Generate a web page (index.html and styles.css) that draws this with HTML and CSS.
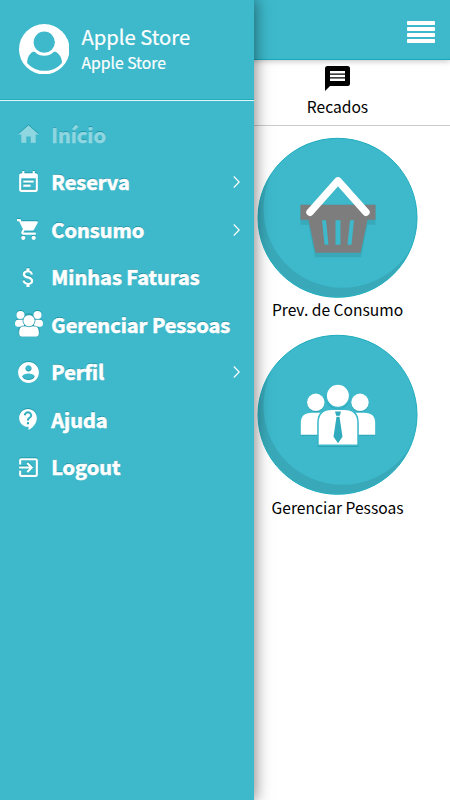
FILE: index.html
```html
<!DOCTYPE html>
<html lang="pt-BR">
<head>
<meta charset="utf-8">
<title>Início</title>
<link rel="stylesheet" href="styles.css">
</head>
<body>
<div class="page">
  <header class="topbar">
    <svg class="burger" viewBox="0 0 28 22"><rect width="28" height="4" rx=".8"/><rect y="6" width="28" height="4" rx=".8"/><rect y="12" width="28" height="4" rx=".8"/><rect y="18" width="28" height="4" rx=".8"/></svg>
  </header>
  <section class="tabs">
    <a class="tab">
      <svg class="message" viewBox="0 0 25 25"><path d="M2.500 0h20A2.500 2.500 0 0 1 25 2.500v15a2.500 2.500 0 0 1-2.500 2.500H5L0 25V2.500A2.500 2.500 0 0 1 2.500 0zM5 5v2.500h15V5zm0 3.700v2.500h15V8.700zm0 3.800V15h15v-2.500z"/></svg>
      <span>Recados</span>
    </a>
  </section>
  <main class="tiles">
    <a class="tile">
      <span class="disc">
        <svg class="art" viewBox="0 0 160 160">
          <path class="shade" d="M43 67h75v20h-8l-6.500 32.500h-46L51 87h-8z"/>
          <path class="basket" d="M43 67h75v15h-8l-7 33H58l-7-33h-8z"/>
          <path class="slots" d="M64.500 82.500h4l2.500 24.500h-4zM78 82.500h5V107h-5zM92.500 82.500h4L94 107h-4z"/>
          <path class="handle" d="M52.500 74.500L80.500 43l28 31.500"/>
        </svg>
      </span>
      <span class="caption">Prev. de Consumo</span>
    </a>
    <a class="tile">
      <span class="disc">
        <svg class="art people" viewBox="0 0 160 160">
          <g><circle cx="58.300" cy="67.500" r="8.700"/><circle cx="102.500" cy="67.500" r="8.700"/><path d="M43.300 100V88q0-10 11-10h9q-3 4-3 10v12zM117.700 100V88q0-10-11-10h-9q3 4 3 10v12z"/></g>
          <circle class="front" cx="80.400" cy="61" r="11.700"/>
          <path class="front" d="M60.500 110.500V88q0-13.500 14-13.500h12q14 0 14 13.500v22.500z"/>
          <path class="tie" d="M77.500 76.700h6l-1.500 5.300 3 20-4.500 6.500L76 102l3-20z"/><path class="knot" d="M78 81.500h5"/>
        </svg>
      </span>
      <span class="caption">Gerenciar Pessoas</span>
    </a>
  </main>
</div>

<aside class="drawer">
  <div class="profile">
    <svg class="avatar" viewBox="0 0 50 50"><circle class="plate" cx="25" cy="25" r="25"/><path class="cut" d="M13.700 27.500C9.500 30 8.300 34 8 38.500 17 49 34 49 42.500 38.500 42.500 34 40.500 30 36.300 27.500z"/><circle class="plate" cx="25" cy="18.500" r="13"/><circle class="cut" cx="25" cy="18" r="10.500"/></svg>
    <div class="who"><strong>Apple Store</strong><span>Apple Store</span></div>
  </div>
  <nav class="menu">
    <a class="item current"><svg class="icon" viewBox="0 0 24 24"><path d="M10 20v-6h4v6h5v-8h3L12 3 2 12h3v8z"/></svg><span>Início</span></a>
    <a class="item"><svg class="icon" viewBox="0 0 24 24"><path d="M17 10H7v2h10v-2zm2-7h-1V1h-2v2H8V1H6v2H5c-1.110 0-1.990.9-1.990 2L3 19c0 1.100.89 2 2 2h14c1.100 0 2-.9 2-2V5c0-1.100-.9-2-2-2zm0 16H5V8h14v11zm-5-5H7v2h7v-2z"/></svg><span>Reserva</span><svg class="chevron" viewBox="0 0 6 11"><path d="M.5.5l5 5-5 5"/></svg></a>
    <a class="item"><svg class="icon" viewBox="0 0 24 24"><path d="M7 18c-1.100 0-1.990.9-1.990 2S5.900 22 7 22s2-.9 2-2-.9-2-2-2zM1 2v2h2l3.600 7.590-1.350 2.450c-.16.28-.25.61-.25.960 0 1.100.9 2 2 2h12v-2H7.420c-.14 0-.25-.11-.25-.25l.03-.12.9-1.630h7.450c.75 0 1.410-.41 1.750-1.030l3.580-6.490A1 1 0 0 0 20 4H5.210l-.94-2H1zm16 16c-1.100 0-1.990.9-1.990 2s.89 2 1.990 2 2-.9 2-2-.9-2-2-2z"/></svg><span>Consumo</span><svg class="chevron" viewBox="0 0 6 11"><path d="M.5.5l5 5-5 5"/></svg></a>
    <a class="item"><svg class="icon" viewBox="0 0 24 24"><path d="M11.800 10.900c-2.270-.59-3-1.200-3-2.150 0-1.090 1.010-1.850 2.700-1.850 1.780 0 2.440.85 2.500 2.100h2.210c-.07-1.720-1.120-3.300-3.210-3.810V3h-3v2.160c-1.940.42-3.500 1.680-3.500 3.610 0 2.310 1.910 3.460 4.700 4.130 2.500.6 3 1.480 3 2.410 0 .69-.49 1.790-2.700 1.790-2.060 0-2.870-.92-2.980-2.100h-2.200c.12 2.190 1.760 3.420 3.680 3.830V21h3v-2.150c1.950-.37 3.500-1.500 3.500-3.550 0-2.840-2.430-3.810-4.700-4.400z"/></svg><span>Minhas Faturas</span></a>
    <a class="item"><svg class="icon group" viewBox="0 0 28 26"><circle cx="5.500" cy="4" r="4"/><circle cx="22.500" cy="4" r="4"/><path d="M0 13c0-3 1-4.300 3-4.300h6v7H2.500Q0 15.500 0 13zM28 13c0-3-1-4.300-3-4.300h-6v7h6.500q2.500-.2 2.500-2.700z"/><path class="rim" d="M3.700 22.500c0-4.500 1-7.500 5.500-7.500h9.600c4.500 0 5.500 3 5.500 7.500q0 3.500-3 3.500H6.700q-3 0-3-3.500z"/><circle class="rim" cx="14" cy="9.700" r="6"/></svg><span>Gerenciar Pessoas</span></a>
    <a class="item"><svg class="icon" viewBox="0 0 24 24"><path d="M12 2C6.480 2 2 6.480 2 12s4.480 10 10 10 10-4.480 10-10S17.520 2 12 2zm0 3c1.660 0 3 1.340 3 3s-1.340 3-3 3-3-1.340-3-3 1.340-3 3-3zm0 14.200c-2.500 0-4.710-1.280-6-3.220.03-1.990 4-3.080 6-3.080 1.990 0 5.970 1.090 6 3.080-1.290 1.940-3.500 3.220-6 3.220z"/></svg><span>Perfil</span><svg class="chevron" viewBox="0 0 6 11"><path d="M.5.5l5 5-5 5"/></svg></a>
    <a class="item"><svg class="icon" viewBox="0 0 24 24"><path d="M11.500 2C6.810 2 3 5.810 3 10.500S6.810 19 11.500 19h.5v3c4.860-2.340 8-7 8-11.500C20 5.810 16.190 2 11.500 2zm1 14.500h-2v-2h2v2zm0-3.500h-2c0-3.250 3-3 3-5 0-1.100-.9-2-2-2s-2 .9-2 2h-2c0-2.210 1.790-4 4-4s4 1.790 4 4c0 2.500-3 2.750-3 5z"/></svg><span>Ajuda</span></a>
    <a class="item"><svg class="icon" viewBox="0 0 24 24"><path d="M10.090 15.590L11.500 17l5-5-5-5-1.410 1.410L12.670 11H3v2h9.670l-2.580 2.590zM19 3H5c-1.110 0-2 .9-2 2v4h2V5h14v14H5v-4H3v4c0 1.100.89 2 2 2h14c1.100 0 2-.9 2-2V5c0-1.100-.9-2-2-2z"/></svg><span>Logout</span></a>
  </nav>
</aside>
</body>
</html>
```
FILE: styles.css
```css
* { box-sizing: border-box; }

body {
  margin: 0;
  height: 800px;
  overflow: hidden;
  position: relative;
  background: #fff;
  color: #000;
  font-family: "Noto Sans CJK SC", "Noto Sans", sans-serif;
}

svg { display: block; }

.topbar {
  height: 60px;
  padding: 5px 15px 0 0;
  display: flex;
  align-items: center;
  justify-content: flex-end;
  background: #3db9cb;
  border-bottom: 1px solid #16a9bb;
  box-shadow: 0 1px 6px rgba(0, 0, 0, .25);
}

.burger { width: 28px; height: 22px; fill: #fff; }

.tabs {
  display: grid;
  grid-template-columns: 1fr 1fr;
  height: 66px;
  padding-top: 6px;
  border-bottom: 1px solid #ccc;
}

.tab {
  grid-column: 2;
  display: flex;
  flex-direction: column;
  align-items: center;
  font-size: 15.600px;
  line-height: 24px;
}

.message { width: 25px; height: 25px; margin-bottom: 3px; }

.tiles {
  display: grid;
  grid-template-columns: 1fr 1fr;
  padding-top: 11.500px;
}

.tile {
  grid-column: 2;
  height: 197.500px;
  display: flex;
  flex-direction: column;
  align-items: center;
}

.disc {
  width: 160px;
  height: 160px;
  flex: none;
  border-radius: 50%;
  background: #3db9cb;
  border: 1px solid #1eacbd;
  box-shadow: inset 5px -9px 0 #39a9b9;
  transform: translate(-.5px, -.2px);
}

.art { width: 160px; height: 160px; margin: -1px; }
.shade { fill: #39a9b9; }
.basket { fill: #7d7d7d; }
.slots { fill: #3db9cb; }
.handle { fill: none; stroke: #fff; stroke-width: 7.400; stroke-linecap: round; stroke-linejoin: round; }
.people { fill: #fff; filter: drop-shadow(0 1px 0 #2aa3b4); }
.front { stroke: #3db9cb; stroke-width: 1.500; }
.tie { fill: #2fabbd; }
.knot { fill: none; stroke: #fff; stroke-width: 1; }

.caption { margin-top: -.5px; font-size: 15.600px; line-height: 24px; white-space: nowrap; }

.drawer {
  position: absolute;
  left: 0;
  top: 0;
  width: 254px;
  height: 800px;
  background: #3db9cb;
  color: #fff;
  box-shadow: 0 0 15px 1px rgba(0, 0, 0, .5);
}

.profile {
  height: 101px;
  padding: 0 0 2px 18.500px;
  display: flex;
  align-items: center;
  gap: 12.500px;
  border-bottom: 1px solid #e2f5f7;
  box-shadow: inset 0 -1px 0 #20adbe;
}

.avatar { width: 50.500px; height: 50.500px; }
.plate { fill: #fff; }
.cut { fill: #3db9cb; }
.who { display: flex; flex-direction: column; white-space: nowrap; -webkit-text-stroke: .2px #fff; }
.who strong { font-size: 20.200px; font-weight: 400; line-height: 26px; }
.who span { font-size: 15.700px; line-height: 25px; }

.menu { padding-top: 10px; }

.item {
  height: 47.500px;
  padding: 0 14.500px 0 16px;
  display: flex;
  align-items: center;
  font-size: 20px;
  font-weight: 700;
  white-space: nowrap;
  text-shadow: 0 -1px 0 #168c9c;
}

.item span { flex: 1; margin-top: -1.500px; -webkit-text-stroke: .6px currentColor; }
.icon { width: 25px; height: 25px; margin-right: 10.300px; flex: none; fill: #fff; filter: drop-shadow(0 -1px 0 #209bab); }
.group { width: 28px; height: 26px; margin: -1px 8.300px 0 -1px; }
.rim { stroke: #289eae; stroke-width: .8; }
.current { color: #8ed7e1; }
.current .icon { fill: #8ed7e1; }
.chevron { width: 7px; height: 12px; fill: none; stroke: #fff; stroke-width: 1.100; }
```
